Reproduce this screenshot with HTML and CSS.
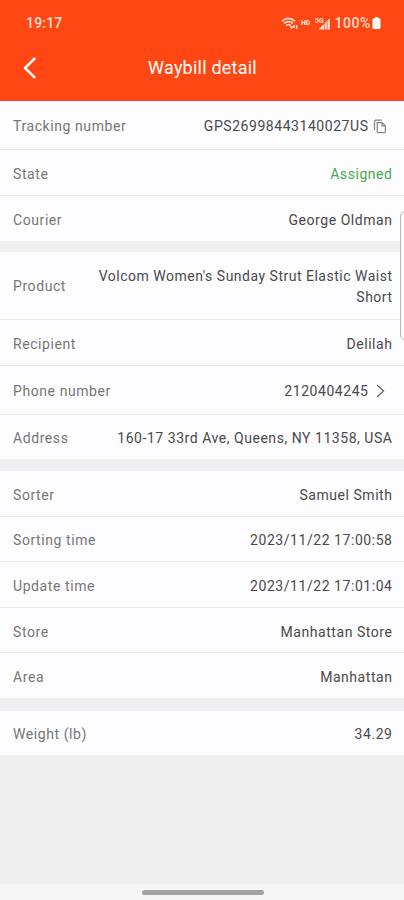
FILE: index.html
```
<!DOCTYPE html>
<html lang="en">
<head>
<meta charset="utf-8">
<title>Waybill detail</title>
<link rel="stylesheet" href="styles.css">
</head>
<body>
<div class="screen">
  <header class="header">
    <div class="status">
      <span class="clock">19:17</span>
      <div class="indicators">
        <svg class="wifi" width="18" height="13" viewBox="0 0 18 13" fill="none" stroke="currentColor" stroke-width="1.600"><path d="M1 4.200C4.600.400 10.400.400 14 4.200M3.100 6.400c2.400-2.500 6.400-2.500 8.800 0M5.200 8.600c1.300-1.400 3.300-1.400 4.600 0"/><path d="M8.500 9.300h4L10.500 12.500z" fill="currentColor" stroke="none"/><path d="M13 8v3M15.600 8v4" stroke-width="1.500"/></svg>
        <span class="hd">HD</span>
        <svg class="signal" width="15" height="13" viewBox="0 0 15 13" fill="currentColor"><path d="M3.500 12.500 9.300 6.700v5.800zM9.900 6.100l2-2v8.400h-2zM12.500 3.500 14.800 1.200v11.300h-2.300z"/><text x="0" y="5.500" class="net">5G</text></svg>
        <span class="percent">100%</span>
        <svg class="battery" width="9" height="12" viewBox="0 0 9 12" fill="#fff"><path d="M3 0h3v1.300h1.200a1.300 1.300 0 0 1 1.300 1.300v8.100A1.300 1.300 0 0 1 7.200 12H1.800A1.300 1.300 0 0 1 .5 10.700V2.600a1.300 1.300 0 0 1 1.300-1.300H3z"/></svg>
      </div>
    </div>
    <div class="nav">
      <svg class="back" width="14" height="22" viewBox="0 0 14 22" fill="none" stroke="#fff" stroke-width="2.500" stroke-linecap="round" stroke-linejoin="round"><path d="M11.500 1.700 2 11l9.500 9.300"/></svg>
      <h1 class="title">Waybill detail</h1>
    </div>
  </header>

  <main class="content">
    <section class="group">
      <div class="row tall"><span class="label">Tracking number</span><span class="value tracking">GPS26998443140027US<svg class="copy" width="14" height="15" viewBox="0 0 14 15" fill="none" stroke="#858585" stroke-width="1.200"><path d="M1.500 11V2.500A1.300 1.300 0 0 1 2.800 1.200H9"/><path d="M4.200 3.600h4.900l3.300 3.200v5.800a1 1 0 0 1-1 1H5.200a1 1 0 0 1-1-1z"/><path d="M9 3.600v3.200h3.200"/></svg></span></div>
      <div class="row"><span class="label">State</span><span class="value assigned">Assigned</span></div>
      <div class="row last"><span class="label">Courier</span><span class="value">George Oldman</span></div>
    </section>
    <section class="group second">
      <div class="row product"><span class="label">Product</span><span class="value long">Volcom Women's Sunday Strut Elastic Waist<br>Short</span></div>
      <div class="row"><span class="label">Recipient</span><span class="value">Delilah</span></div>
      <div class="row tall"><span class="label">Phone number</span><span class="value phone">2120404245<svg class="chevron" width="9" height="14" viewBox="0 0 9 14" fill="none" stroke="#666" stroke-width="1.300"><path d="m1 1 6.500 6L1 13"/></svg></span></div>
      <div class="row last"><span class="label">Address</span><span class="value address">160-17 33rd Ave, Queens, NY 11358, USA</span></div>
    </section>
    <section class="group third">
      <div class="row"><span class="label">Sorter</span><span class="value">Samuel Smith</span></div>
      <div class="row"><span class="label">Sorting time</span><span class="value">2023/11/22 17:00:58</span></div>
      <div class="row"><span class="label">Update time</span><span class="value">2023/11/22 17:01:04</span></div>
      <div class="row"><span class="label">Store</span><span class="value">Manhattan Store</span></div>
      <div class="row last"><span class="label">Area</span><span class="value">Manhattan</span></div>
    </section>
    <section class="group fourth">
      <div class="row last"><span class="label">Weight (lb)</span><span class="value">34.29</span></div>
    </section>
  </main>
  <footer class="gesture"><span class="pill"></span></footer>
  <div class="edge-panel"></div>
</div>
</body>
</html>
```
FILE: styles.css
```
* { box-sizing: border-box; }

body {
  margin: 0;
  font-family: Roboto, "Liberation Sans", sans-serif;
  background: #efefef;
}

.screen {
  position: relative;
  display: flex;
  flex-direction: column;
  width: 404px;
  height: 900px;
  overflow: hidden;
}

.header {
  height: 101px;
  color: #fff;
  background: #ff4713;
  border-bottom: 1px solid #f4433a;
}

.status {
  display: flex;
  align-items: center;
  justify-content: space-between;
  height: 46px;
  padding: 0 23px 0 26px;
  color: #ffded5;
}

.clock { font-size: 14px; font-weight: 500; letter-spacing: 0.2px; }
.indicators { display: flex; align-items: center; }
.hd { margin: 0 5px 0 2px; font-size: 7px; font-weight: 900; }
.net { font-size: 7px; font-weight: 700; }
.percent { margin: 0 1px 0 4px; font-size: 14px; font-weight: 500; letter-spacing: 0.6px; }

.nav {
  display: grid;
  grid-template-columns: 44px 1fr 44px;
  align-items: center;
  height: 43px;
}

.back { margin-left: 23px; }

.title {
  margin: 0;
  padding-left: 1px;
  font-size: 18px;
  font-weight: 400;
  letter-spacing: 0.22px;
  text-align: center;
}

.group { background: #fdfcfe; }
.second { margin-top: 11px; }
.third { margin-top: 12px; }
.fourth { margin-top: 13px; }

.row {
  display: flex;
  align-items: center;
  justify-content: space-between;
  height: 46px;
  padding: 3px 12px 0 13px;
  border-bottom: 1px solid #ebebed;
  font-size: 14px;
  line-height: 21px;
  letter-spacing: 0.55px;
}

.tall { height: 49px; padding-top: 2px; }
.last { height: 45px; border-bottom: 0; }
.product { height: 68px; padding-top: 2px; }
.second .last { height: 44px; }
.third .row { height: 45.6px; padding-top: 4px; }
.third .last { height: 45px; }
.fourth .row { height: 44px; }
.label { color: #777; letter-spacing: 0.58px; }
.value { color: #4a4a4a; text-align: right; margin-right: -0.5px; white-space: nowrap; }
.long { letter-spacing: 0.5px; }
.address { letter-spacing: 0.54px; }
.assigned { color: #4aa950; }
.tracking, .phone { display: flex; align-items: center; }
.copy { margin: 0 6px 0 4px; }
.chevron { margin: 0 8px 0 7px; }

.gesture {
  display: flex;
  justify-content: center;
  height: 16px;
  margin-top: auto;
  padding: 6px 0 0 1px;
  background: #f6f6f6;
}

.pill { width: 122px; height: 5px; border-radius: 3px; background: #a2a2a2; }

.edge-panel {
  position: absolute;
  top: 211px;
  right: -8px;
  width: 12px;
  height: 129px;
  border: 1px solid #b8b8b8;
  border-radius: 5px;
  background: #fafafa;
}
```
